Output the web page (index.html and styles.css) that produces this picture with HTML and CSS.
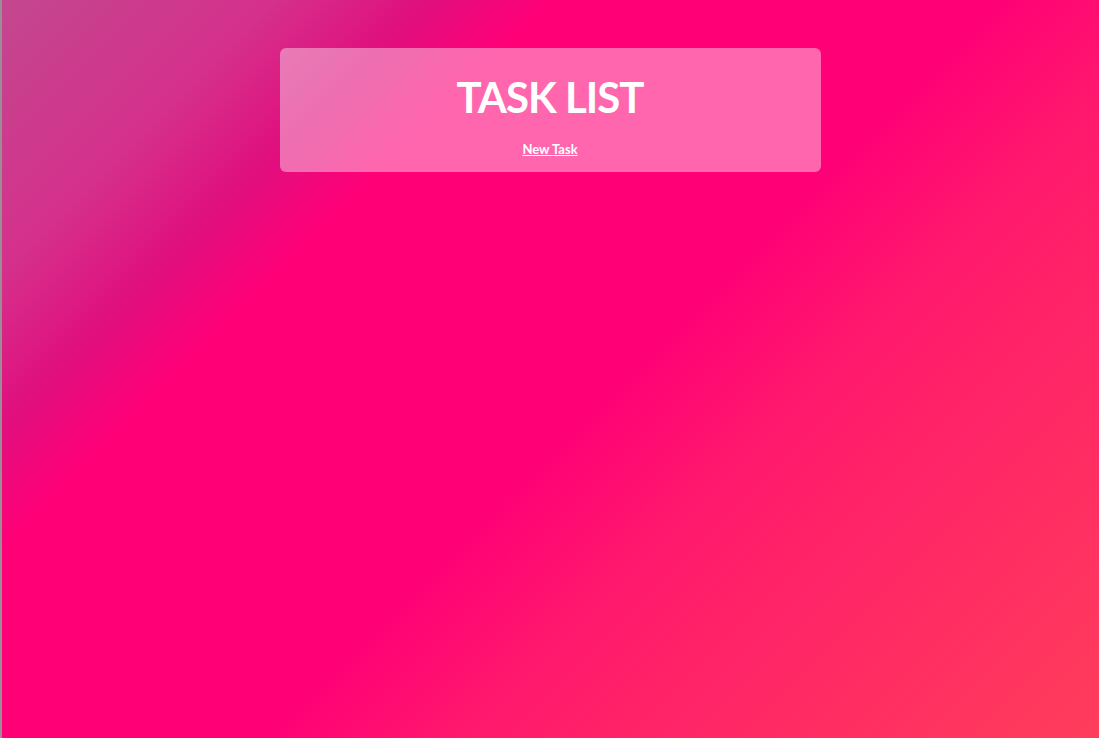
FILE: index.html
```html
<!DOCTYPE html>
<html lang="en">
<head>
<meta charset="utf-8">
<title>Task List</title>
<link rel="stylesheet" href="styles.css">
</head>
<body>
<main class="page">
  <section class="card">
    <h1 class="title">TASK LIST</h1>
    <a class="new-task" href="#">New Task</a>
  </section>
</main>
</body>
</html>
```
FILE: styles.css
```css
html, body {
  margin: 0;
  padding: 0;
  height: 100%;
}
body {
  font-family: Lato, "Open Sans", sans-serif;
  background: linear-gradient(135deg, #c2488f 0%, #d5308b 15%, #e0107f 23%, #ff0077 30%, #ff0077 54%, #ff1a6c 66%, #ff3d5b 100%);
  border-left: 2px solid #9c8c95;
  box-sizing: border-box;
  overflow: hidden;
}
.page {
  display: flex;
  flex-direction: column;
  align-items: center;
  padding-top: 48px;
}
.card {
  width: 541px;
  box-sizing: border-box;
  margin-left: -1px;
  padding: 24px 0 14px;
  border-radius: 6px;
  background: rgba(255, 255, 255, 0.4);
  display: flex;
  flex-direction: column;
  align-items: center;
  gap: 20px;
}
.title {
  margin: 0;
  font-size: 42px;
  line-height: 1.2;
  font-weight: 700;
  letter-spacing: -1px;
  color: #fff;
}
.new-task {
  font-size: 13px;
  line-height: 1.2;
  font-weight: 700;
  color: #fff;
  text-decoration: underline;
}
```
